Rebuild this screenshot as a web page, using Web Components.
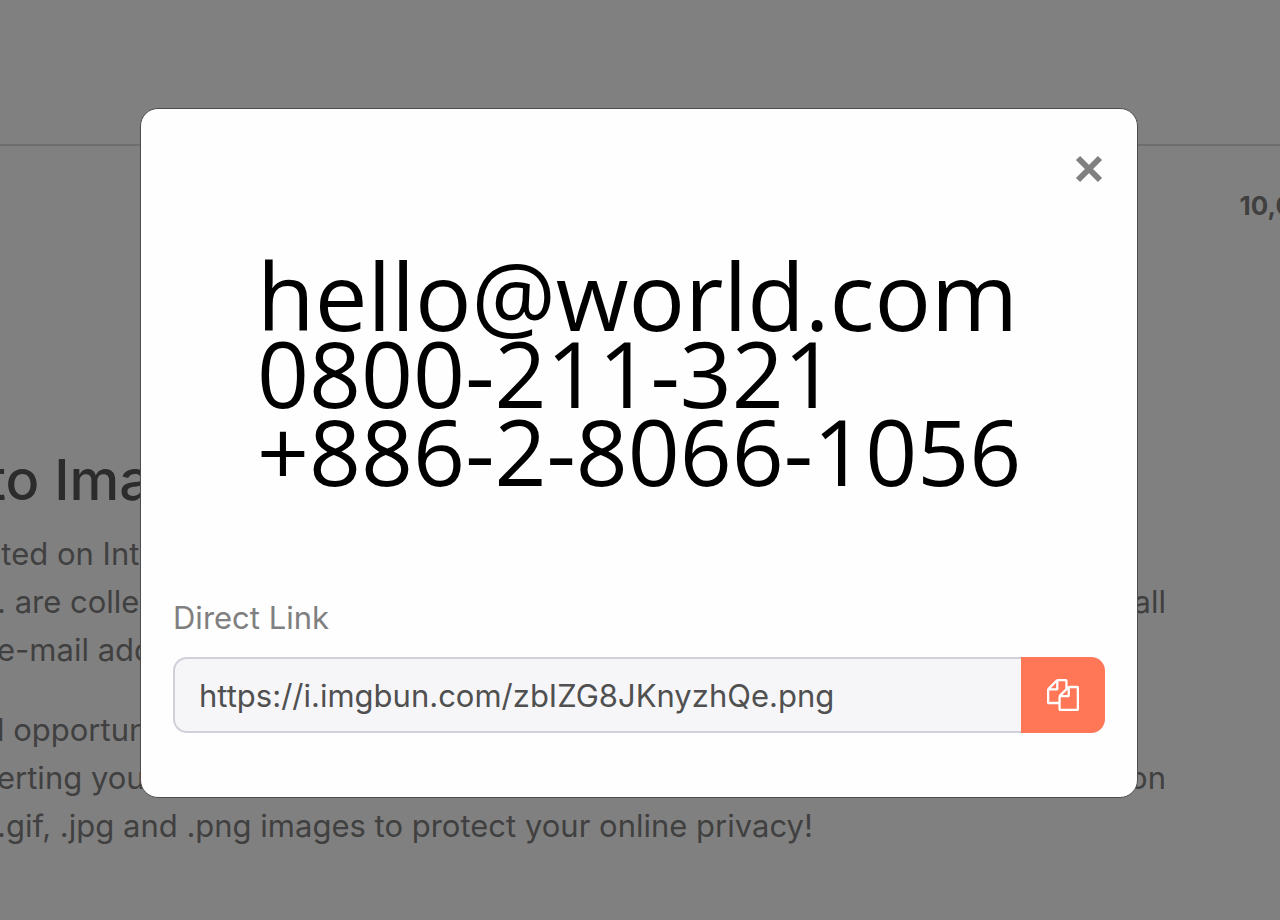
<!DOCTYPE html>
<html lang="en">
<head>
<meta charset="utf-8">
<meta name="viewport" content="width=device-width, initial-scale=1">
<title>Text to Image</title>
<style>
  html, body { margin: 0; min-height: 100%; }
  body { background: #808080; font-family: Inter, "Liberation Sans", sans-serif; color: #404040; overflow: hidden; }
</style>
</head>
<body>
<page-backdrop>
  <strong slot="count">10,000</strong>
  <page-article>
    <h1 slot="title">to Image</h1>
    <text-line class="cut">sted on Int</text-line>
    <text-line>. are collec<span slot="end">all</span></text-line>
    <text-line>e-mail add</text-line>
    <text-line class="start">l opportun</text-line>
    <text-line>erting your<span slot="end">on</span></text-line>
    <text-line>.gif, .jpg and .png images to protect your online privacy!</text-line>
  </page-article>
</page-backdrop>
<image-dialog>
  <text-preview>
    <span>hello@world.com</span>
    <span class="digits">0800-211-321</span>
    <span class="digits">+886-2-8066-1056</span>
  </text-preview>
  <copy-field label="Direct Link" value="https://i.imgbun.com/zbIZG8JKnyzhQe.png"></copy-field>
</image-dialog>
<script>
class Base extends HTMLElement {
  constructor() {
    super();
    this.attachShadow({ mode: "open" }).innerHTML = this.constructor.markup;
  }
}

customElements.define("page-backdrop", class extends Base {
  static markup = `
    <style>
      :host { display: block; overflow: hidden; }
      header { height: 144px; border-bottom: 2px solid #6e6e6e; }
      .count { display: flex; justify-content: flex-end; height: 302px; padding-top: 40px; box-sizing: border-box; font-size: 26px; line-height: 40px; margin-right: -48px; }
      ::slotted(strong) { font-weight: 700; color: #404040; }
    </style>
    <header></header>
    <div class="count"><slot name="count"></slot></div>
    <slot></slot>`;
});

customElements.define("page-article", class extends Base {
  static markup = `
    <style>
      :host { display: block; margin: 0 114px 0 -3px; font-size: 31px; line-height: 48px; }
      ::slotted(h1) { margin: 0 0 18px -10px; font-size: 56px; font-weight: 500; line-height: 64px; color: #2c2c2c; }
      ::slotted(.start) { margin-top: 32px; }
      ::slotted(.cut) { margin-left: -12px; }
    </style>
    <slot name="title"></slot>
    <slot></slot>`;
});

customElements.define("text-line", class extends Base {
  static markup = `
    <style>
      :host { display: flex; justify-content: space-between; white-space: nowrap; }
    </style>
    <span><slot></slot></span><slot name="end"></slot>`;
});

customElements.define("image-dialog", class extends Base {
  static markup = `
    <style>
      :host { display: block; position: absolute; top: 108px; left: 140px; right: 142px; }
      section { box-sizing: border-box; padding: 32px; border: 1px solid #4c4c4c; border-radius: 18px; background: #fefefe; }
      .bar { display: flex; justify-content: flex-end; height: 115px; }
      button { width: 32px; height: 56px; padding: 0; border: 0; background: none; color: #808080; display: grid; place-items: center; cursor: pointer; }
      svg { display: block; width: 28px; height: 28px; }
    </style>
    <section role="dialog" aria-label="Image link">
      <div class="bar">
        <button type="button" aria-label="Close">
          <svg viewBox="0 0 28 28" fill="none" stroke="currentColor" stroke-width="6"><path d="M3 3 25 25M25 3 3 25"/></svg>
        </button>
      </div>
      <slot></slot>
    </section>`;
});

customElements.define("text-preview", class extends Base {
  static markup = `
    <style>
      :host { display: flex; flex-direction: column; height: 338px; padding-left: 84px; box-sizing: border-box; font-family: "Open Sans", "Noto Sans", sans-serif; font-size: 94px; line-height: 78px; color: #000; white-space: nowrap; }
      ::slotted(.digits) { font-size: 91px; }
    </style>
    <slot></slot>`;
});

customElements.define("copy-field", class extends Base {
  static markup = `
    <style>
      :host { display: block; padding-bottom: 32px; }
      label { display: block; margin-bottom: 15px; font-size: 31px; line-height: 48px; color: #808080; }
      .group { display: flex; height: 76px; }
      input { flex: 1; min-width: 0; box-sizing: border-box; margin: 0; padding: 0 24px; border: 2px solid #d0d0da; border-right: 0; border-radius: 14px 0 0 14px; background: #f6f6f9; font: inherit; font-size: 31px; color: #505050; outline: 0; }
      button { width: 84px; padding: 0; border: 0; border-radius: 0 14px 14px 0; background: #ff7757; color: #fff; display: grid; place-items: center; cursor: pointer; }
      svg { display: block; width: 32px; height: 32px; }
    </style>
    <label for="link"></label>
    <div class="group">
      <input id="link" type="text" readonly>
      <button type="button" aria-label="Copy link">
        <svg viewBox="0 0 1792 1792" fill="currentColor"><path d="M1696 384q40 0 68 28t28 68v1216q0 40-28 68t-68 28H736q-40 0-68-28t-28-68v-288H96q-40 0-68-28t-28-68V640q0-40 20-88t48-76L476 68q28-28 76-48t88-20h416q40 0 68 28t28 68v328q68-40 128-40h416zm-544 213L853 896h299V597zM512 213L213 512h299V213zm196 647l316-316V128H640v416q0 40-28 68t-68 28H128v640h512v-256q0-40 20-88t48-76zm956 804V512h-384v416q0 40-28 68t-68 28H768v640h896z"/></svg>
      </button>
    </div>`;
  connectedCallback() {
    this.shadowRoot.querySelector("label").textContent = this.getAttribute("label");
    this.shadowRoot.querySelector("input").value = this.getAttribute("value");
  }
});
</script>
</body>
</html>
